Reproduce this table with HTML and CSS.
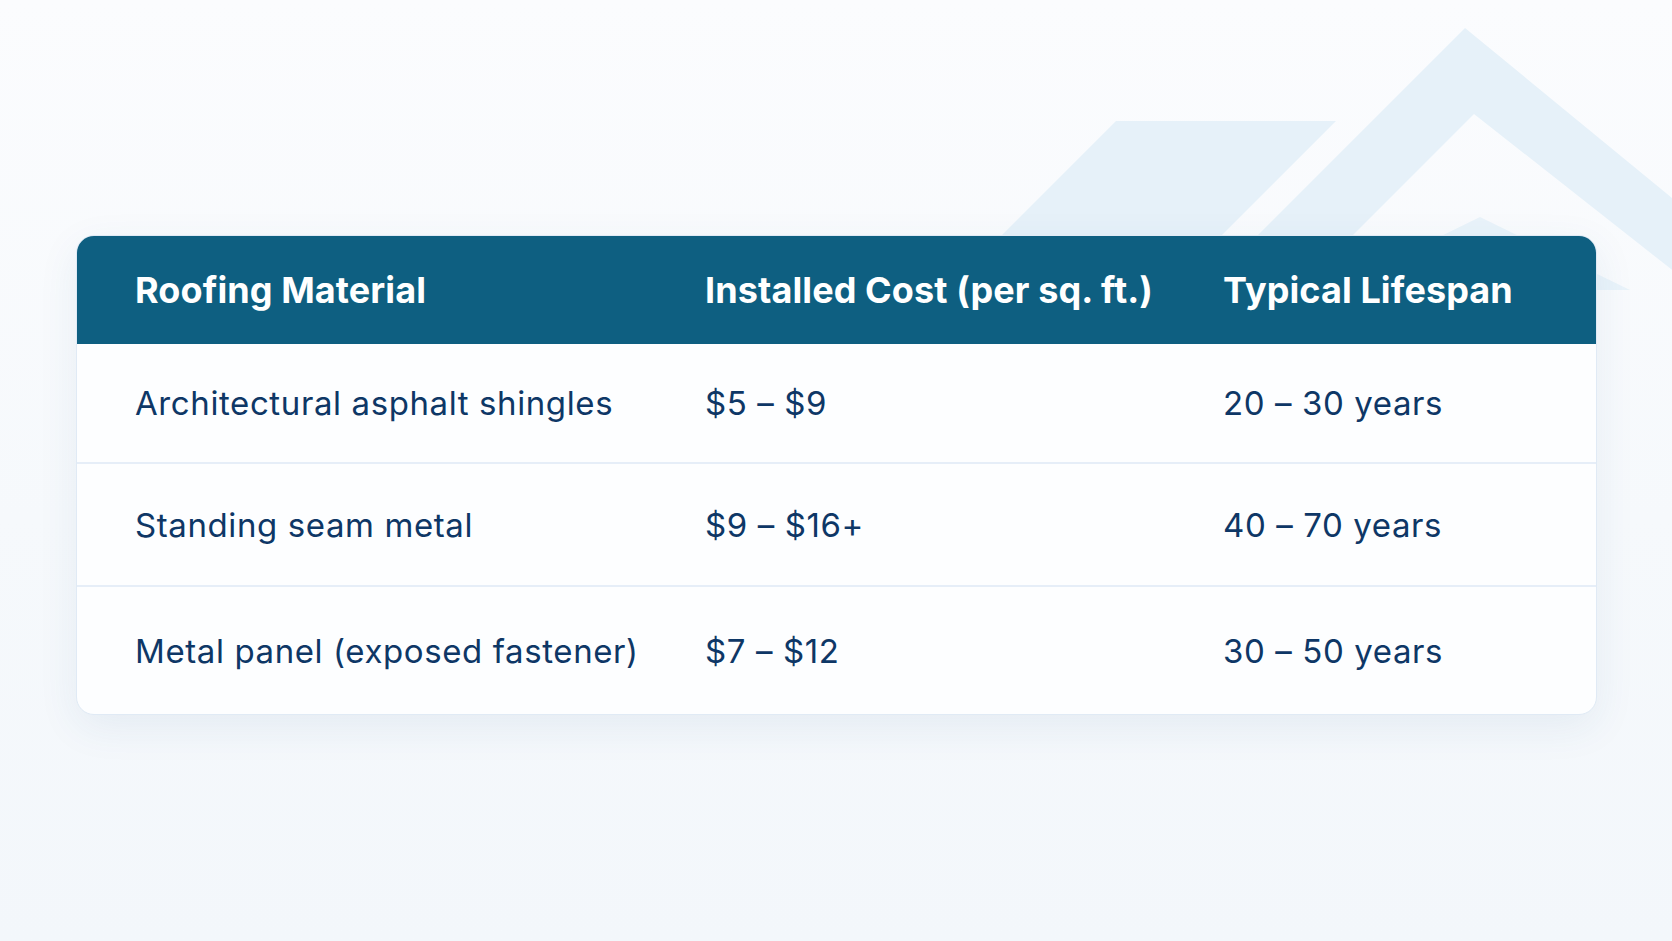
FILE: index.html
```html
<!DOCTYPE html>
<html lang="en">
<head>
<meta charset="utf-8">
<title>Roofing Material Comparison</title>
<link rel="stylesheet" href="styles.css">
</head>
<body>
<div class="page">
  <svg class="backdrop" width="1672" height="941" viewBox="0 0 1672 941" aria-hidden="true">
    <polygon class="roof-a" points="1116,121 1336,121 1157,300 937,300"/>
    <polygon class="roof-b" points="1465,28 1790,295 1704,295 1474,114 1293,295 1198,295"/>
    <polygon class="roof-c" points="1480,217 1630,290 1331,290"/>
  </svg>
  <div class="card">
    <div class="row head">
      <div class="cell">Roofing Material</div>
      <div class="cell">Installed Cost (per sq. ft.)</div>
      <div class="cell">Typical Lifespan</div>
    </div>
    <div class="row r1">
      <div class="cell">Architectural asphalt shingles</div>
      <div class="cell">$5 – $9</div>
      <div class="cell">20 – 30 years</div>
    </div>
    <div class="row r2">
      <div class="cell">Standing seam metal</div>
      <div class="cell">$9 – $16+</div>
      <div class="cell">40 – 70 years</div>
    </div>
    <div class="row r3">
      <div class="cell">Metal panel (exposed fastener)</div>
      <div class="cell">$7 – $12</div>
      <div class="cell">30 – 50 years</div>
    </div>
  </div>
</div>
</body>
</html>
```

FILE: styles.css
```css
html, body {
  margin: 0;
  padding: 0;
}
body {
  width: 1672px;
  height: 941px;
  overflow: hidden;
  background: linear-gradient(180deg, #fbfcfe 0%, #f6f9fc 55%, #f3f7fb 100%);
  font-family: "Inter", "Liberation Sans", sans-serif;
}
.page {
  position: relative;
  width: 1672px;
  height: 941px;
  padding: 235px 0 0 76px;
  box-sizing: border-box;
}
.backdrop {
  position: absolute;
  top: 0;
  left: 0;
}
.roof-a { fill: #e6f1f9; }
.roof-b { fill: #e6f1f9; }
.roof-c { fill: #e9f3fa; }
.card {
  position: relative;
  width: 1521px;
  box-sizing: border-box;
  background: #fdfeff;
  border: 1px solid #e0eaf5;
  border-radius: 18px;
  overflow: hidden;
  box-shadow: 0 12px 40px rgba(40, 90, 140, 0.08);
}
.row {
  display: grid;
  grid-template-columns: 570px 518px 1fr;
  align-items: center;
  padding-left: 58px;
  box-sizing: border-box;
  color: #0e3766;
  font-size: 33px;
  font-weight: 400;
  letter-spacing: 0.6px;
}
.row.head {
  height: 108px;
  background: #0e5f81;
  color: #ffffff;
  font-size: 36px;
  font-weight: 700;
  letter-spacing: 0.1px;
}
.row.r1 {
  height: 120px;
  border-bottom: 2px solid #e6eef8;
}
.row.r2 {
  height: 123px;
  border-bottom: 2px solid #e6eef8;
}
.row.r3 {
  height: 127px;
}
.cell {
  white-space: nowrap;
}
```
